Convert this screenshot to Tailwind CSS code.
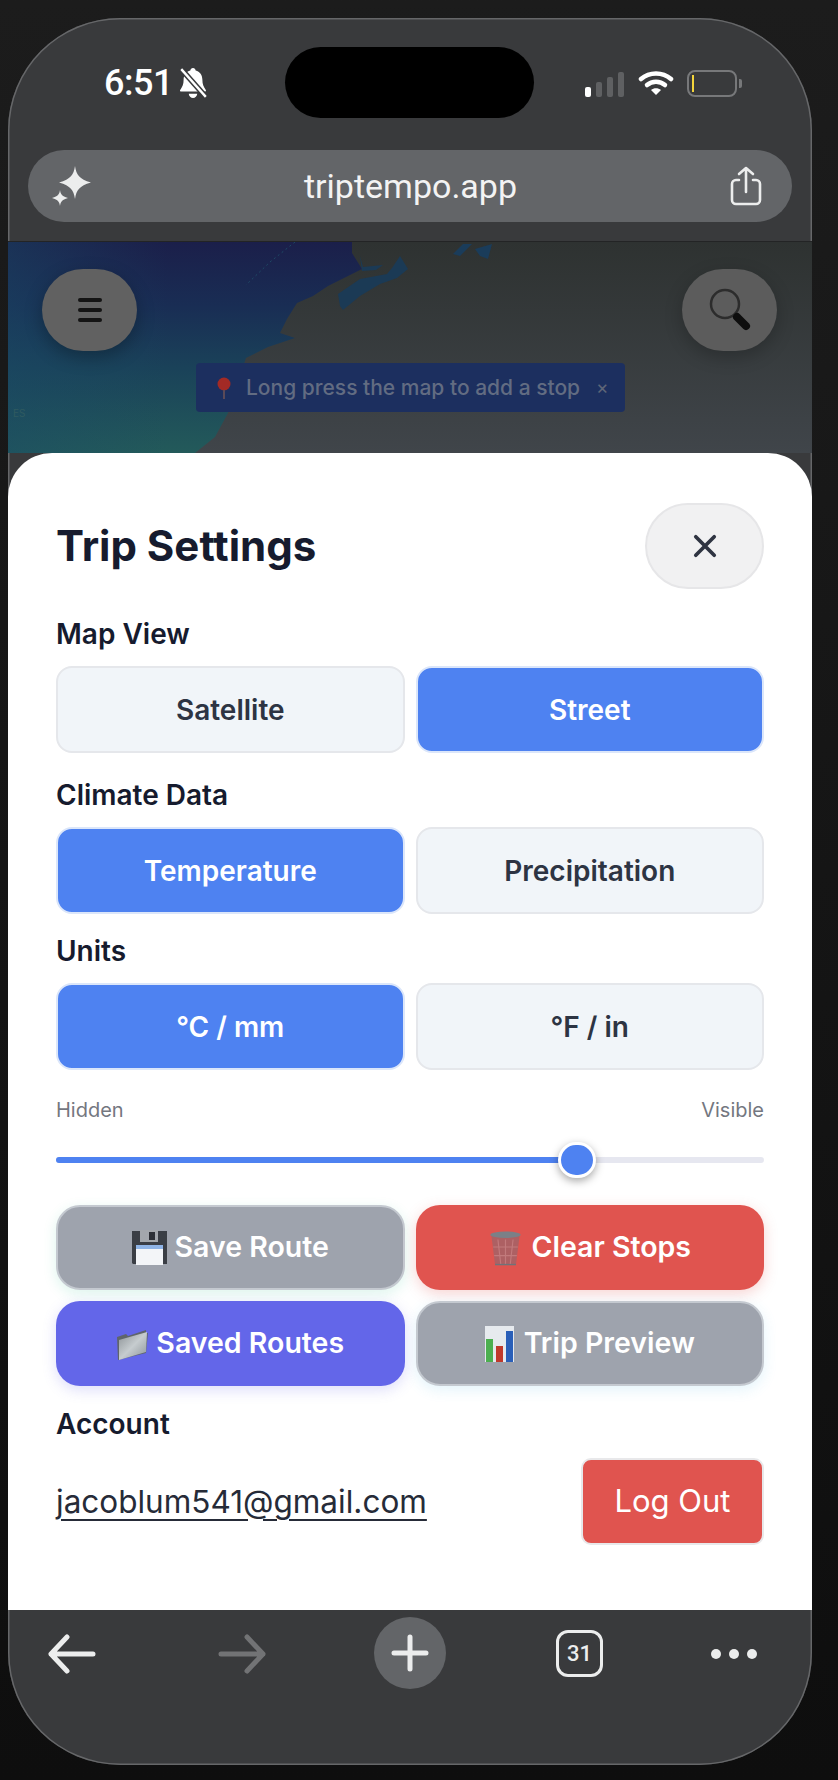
<!DOCTYPE html>
<html>
<head>
<meta charset="utf-8">
<script src="https://cdn.jsdelivr.net/npm/@tailwindcss/browser@4"></script>
</head>
<body class="m-0 bg-[#121212]">
<div class="w-[838px] h-[1780px] pt-[18px] pl-[8px] bg-gradient-to-b from-[#1c1c1c] to-[#0e0e0e] font-['Inter',sans-serif] overflow-hidden">
  <div class="w-[804px] h-[1747px] rounded-[112px] overflow-hidden bg-[#393a3c] shadow-[inset_0_0_0_1.5px_#666769] flex flex-col">
    <!-- status + url -->
    <div class="h-[224px] shrink-0 flex flex-col border-b border-[#232425]">
      <div class="h-[132px] shrink-0 flex items-start relative">
        <div class="absolute left-[277px] top-[29px] w-[249px] h-[71px] rounded-[36px] bg-black"></div>
        <div class="absolute left-[96px] top-[44px] flex items-center gap-[5px] text-white">
          <span class="text-[36px] leading-[42px] font-medium tracking-[-0.5px] font-['Roboto',sans-serif]">6:51</span>
          <svg width="30" height="32" viewBox="0 0 28 30" fill="#fff"><path d="M14 1c1.400 0 2.300 1 2.500 2.200 4 1 6.300 4.300 6.300 8.800 0 4 1 6.500 3.200 9.500.5.800 0 1.500-.8 1.500H2.800c-.8 0-1.300-.7-.8-1.500 2.200-3 3.200-5.500 3.200-9.500 0-4.500 2.300-7.800 6.300-8.800C11.700 2 12.600 1 14 1z"/><path d="M10 25h8c-.3 2.200-1.900 4-4 4s-3.700-1.800-4-4z"/><path d="M3 2l23 26" stroke="#393a3c" stroke-width="5"/><path d="M3 2l23 26" stroke="#fff" stroke-width="2.200"/></svg>
        </div>
        <!-- signal -->
        <div class="absolute left-[577px] top-[53px] flex items-end gap-[5px] h-[26px]">
          <div class="w-[6px] h-[10px] rounded-[2px] bg-white"></div>
          <div class="w-[6px] h-[15px] rounded-[2px] bg-[#5f6062]"></div>
          <div class="w-[6px] h-[20px] rounded-[2px] bg-[#5f6062]"></div>
          <div class="w-[6px] h-[25px] rounded-[2px] bg-[#5f6062]"></div>
        </div>
        <svg class="absolute left-[630px] top-[52px]" width="36" height="26" viewBox="0 0 36 26" fill="none" stroke="#fff" stroke-linecap="round"><path d="M3 9c8.500-7.500 21.500-7.500 30 0" stroke-width="4.500"/><path d="M9 15c5-4.500 13-4.500 18 0" stroke-width="4.500"/><path d="M18 25l-5-5c2.800-2.500 7.200-2.500 10 0z" fill="#fff" stroke="none"/></svg>
        <div class="absolute left-[679px] top-[52px] w-[50px] h-[27px] rounded-[8px] border-2 border-[#77787a] flex items-center pl-[3px]">
          <div class="w-[2px] h-[17px] bg-[#f4d53c]"></div>
        </div>
        <div class="absolute left-[731px] top-[61px] w-[3px] h-[9px] rounded-r-[2px] bg-[#77787a]"></div>
      </div>
      <div class="mx-[20px] h-[72px] rounded-[36px] bg-[#636568] flex items-center justify-between pl-[24px] pr-[29px]">
        <svg width="40" height="40" viewBox="0 0 40 40" fill="#eceded"><path d="M23 0C24.500 9 27 13 39 16.500 27 20 24.500 24 23 33 21.500 24 19 20 7 16.500 19 13 21.500 9 23 0z"/><path d="M8 24c.7 4 1.500 6 8 8-6.500 2-7.300 4-8 8-.7-4-1.500-6-8-8 6.500-2 7.300-4 8-8z"/></svg>
        <span class="text-[34px] leading-[40px] text-[#f3f3f3] font-['Roboto',sans-serif]">triptempo.app</span>
        <svg width="34" height="40" viewBox="0 0 34 40" fill="none" stroke="#eceded" stroke-width="2.600" stroke-linecap="round" stroke-linejoin="round"><path d="M10 14H7a4 4 0 0 0-4 4v16a4 4 0 0 0 4 4h20a4 4 0 0 0 4-4V18a4 4 0 0 0-4-4h-3"/><path d="M17 26V2M10 8l7-6 7 6"/></svg>
      </div>
    </div>
    <!-- map -->
    <div class="relative h-[211px] shrink-0 bg-gradient-to-b from-[#2e3231] to-[#40454a]">
      <svg class="absolute inset-0 w-full h-full" viewBox="0 0 804 211" preserveAspectRatio="none">
        <defs>
          <linearGradient id="oc" x1="0" y1="0" x2="0" y2="1">
            <stop offset="0" stop-color="#1b1f4a"/><stop offset="0.3" stop-color="#192d54"/><stop offset="0.6" stop-color="#1a4259"/><stop offset="1" stop-color="#235a5a"/>
          </linearGradient>
          <linearGradient id="ed" x1="0" y1="0" x2="1" y2="0">
            <stop offset="0" stop-color="#1a4a66" stop-opacity="0.45"/><stop offset="0.45" stop-color="#1a4a66" stop-opacity="0"/>
          </linearGradient>
        </defs>
        <path fill="url(#oc)" d="M0 0H344L344 11 354 27 320 44 305 54 289 61 279 77 272 91 287 96 260 105 238 116 230 140 220 171 207 195 187 211H0z"/>
        <path fill="url(#ed)" d="M0 0H344L344 11 354 27 320 44 305 54 289 61 279 77 272 91 287 96 260 105 238 116 230 140 220 171 207 195 187 211H0z"/>
        <path fill="#1b3a55" d="M330 52 332 64 335 68 352 54 372 42 389 36 400 27 392 14 384 26 379 32 352 37z"/>
        <path fill="#1b3a55" d="M352 14 355 25 375 23 368 28 354 29z"/>
        <path fill="#1a3c5a" d="M445 12 455 2 464 2 452 14z"/>
        <path fill="#1a3c5a" d="M467 7 484 2 480 17 472 14z"/>
        <path fill="none" stroke="#1f4a66" stroke-width="1" stroke-dasharray="2 3" d="M287 0 262 20 238 43"/>
      </svg>
      <div class="absolute left-[34px] top-[27px] w-[95px] h-[82px] rounded-full bg-[#616161] shadow-[0_6px_18px_rgba(0,0,0,0.28)] flex flex-col items-center justify-center gap-[6px]">
        <div class="w-[24px] h-[4px] bg-[#141414] rounded-sm"></div>
        <div class="w-[24px] h-[4px] bg-[#141414] rounded-sm"></div>
        <div class="w-[24px] h-[4px] bg-[#141414] rounded-sm"></div>
      </div>
      <div class="absolute left-[674px] top-[27px] w-[95px] h-[82px] rounded-full bg-[#5c5c5c] shadow-[0_6px_18px_rgba(0,0,0,0.22)] flex items-center justify-center">
        <svg width="46" height="46" viewBox="0 0 46 46" fill="none"><circle cx="18" cy="17" r="14" stroke="#2c2c2c" stroke-width="2.500"/><path d="M30 30l9 9" stroke="#0e0e0e" stroke-width="8" stroke-linecap="round"/></svg>
      </div>
      <div class="absolute left-[188px] top-[121px] w-[429px] h-[49px] rounded-[4px] bg-[#1c2f5f] flex items-center pl-[20px] gap-[14px]">
        <svg width="16" height="22" viewBox="0 0 16 22" class="shrink-0"><circle cx="8" cy="7" r="6.500" fill="#a32a25"/><path d="M8 13v9" stroke="#5a4a58" stroke-width="2"/></svg>
        <span class="text-[21px] leading-[24px] font-medium text-[#626c82] whitespace-nowrap">Long press the map to add a stop</span>
        <span class="ml-[2px] text-[19px] leading-[24px] text-[#5f6678]">×</span>
      </div>
      <span class="absolute left-[5px] top-[165px] text-[10px] leading-[12px] text-[#2f5a60]">ES</span>
    </div>
    <!-- sheet -->
    <div class="relative z-10 h-[1157px] shrink-0 bg-white rounded-t-[44px] pl-[48px] pr-[48px] pt-[50px] flex flex-col">
      <div class="flex items-center justify-between h-[86px]">
        <h1 class="text-[42px] leading-[48px] font-bold text-[#161b2e]">Trip Settings</h1>
        <div class="w-[119px] h-[86px] rounded-full bg-[#f1f1f2] border-2 border-[#e6e6e8] flex items-center justify-center">
          <svg width="24" height="24" viewBox="0 0 26 26" stroke="#2f3442" stroke-width="4" stroke-linecap="round"><path d="M3 3l20 20M23 3L3 23"/></svg>
        </div>
      </div>
      <div class="mt-[29px] text-[28px] leading-[32px] font-semibold text-[#161b2e]">Map View</div>
      <div class="mt-[16px] grid grid-cols-2 gap-[11px]">
        <div class="h-[87px] rounded-[16px] bg-[#f1f5f9] border-2 border-[#e5e7eb] flex items-center justify-center text-[28px] font-semibold text-[#2d3443]">Satellite</div>
        <div class="h-[87px] rounded-[16px] bg-[#4e82f1] border-2 border-[#dbe6fa] flex items-center justify-center text-[28px] font-semibold text-white">Street</div>
      </div>
      <div class="mt-[26px] text-[28px] leading-[32px] font-semibold text-[#161b2e]">Climate Data</div>
      <div class="mt-[16px] grid grid-cols-2 gap-[11px]">
        <div class="h-[87px] rounded-[16px] bg-[#4e82f1] border-2 border-[#dbe6fa] flex items-center justify-center text-[28px] font-semibold text-white">Temperature</div>
        <div class="h-[87px] rounded-[16px] bg-[#f1f5f9] border-2 border-[#e5e7eb] flex items-center justify-center text-[28px] font-semibold text-[#2d3443]">Precipitation</div>
      </div>
      <div class="mt-[21px] text-[28px] leading-[32px] font-semibold text-[#161b2e]">Units</div>
      <div class="mt-[16px] grid grid-cols-2 gap-[11px]">
        <div class="h-[87px] rounded-[16px] bg-[#4e82f1] border-2 border-[#dbe6fa] flex items-center justify-center text-[28px] font-semibold text-white">°C / mm</div>
        <div class="h-[87px] rounded-[16px] bg-[#f1f5f9] border-2 border-[#e5e7eb] flex items-center justify-center text-[28px] font-semibold text-[#2d3443]">°F / in</div>
      </div>
      <div class="mt-[28px] flex justify-between text-[20px] leading-[24px] text-[#74777f]"><span>Hidden</span><span>Visible</span></div>
      <div class="relative mt-[35px] h-[6px] rounded-full bg-[#e6e7f0]">
        <div class="h-full w-[522px] rounded-full bg-[#4e82f1]"></div>
        <div class="absolute left-[502px] -top-[15px] w-[38px] h-[36px] rounded-full bg-[#4e82f1] border-[3px] border-white shadow-[0_3px_8px_rgba(0,0,0,0.35)]"></div>
      </div>
      <div class="mt-[42px] grid grid-cols-2 gap-x-[11px] gap-y-[11px]">
        <div class="h-[85px] rounded-[24px] bg-[#9ea3ad] border-2 border-[#c4c9d0] shadow-[0_4px_14px_rgba(16,185,129,0.14)] flex items-center justify-center gap-[8px] text-[28.5px] font-semibold text-white">
          <svg width="35" height="35" viewBox="0 0 35 35" class="shrink-0"><path d="M0 1h35v33H1l-1-1z" fill="#3a3e45"/><rect x="8" y="0" width="18" height="12" fill="#a3a7ac"/><rect x="17" y="2" width="6" height="8" fill="#2d3036"/><rect x="4" y="15" width="27" height="20" fill="#f3f5f8"/><rect x="4" y="15" width="27" height="4" fill="#8fb4e6"/></svg>
          <span>Save Route</span>
        </div>
        <div class="h-[85px] rounded-[24px] bg-[#e0544f] shadow-[0_4px_14px_rgba(224,84,79,0.25)] flex items-center justify-center gap-[8px] text-[28.5px] font-semibold text-white">
          <svg width="35" height="36" viewBox="0 0 36 38" class="shrink-0"><path d="M3 5h30l-4 32H7z" fill="#ad6063"/><ellipse cx="18" cy="5" rx="16" ry="3.500" fill="#7b8087"/><path d="M10 10l3 26M18 10v26M26 10l-3 26M5 18h26M6 27h24" stroke="#c27a7c" stroke-width="1.200"/><path d="M7 36.500h22" stroke="#6f7379" stroke-width="1.500"/></svg>
          <span>Clear Stops</span>
        </div>
        <div class="h-[85px] rounded-[24px] bg-[#6366e9] shadow-[0_4px_14px_rgba(99,102,233,0.22)] flex items-center justify-center gap-[8px] text-[28.5px] font-semibold text-white">
          <svg width="32" height="32" viewBox="0 0 32 32" class="shrink-0"><defs><linearGradient id="fo" x1="0" y1="0" x2="1" y2="1"><stop offset="0" stop-color="#8c9296"/><stop offset="0.5" stop-color="#c6cccf"/><stop offset="1" stop-color="#8b9398"/></linearGradient></defs><path d="M1 9l9-3 2 2 18-6v3l2 0-2 20L2 32z" fill="#5f656b"/><path d="M3 12L31 4 30 24 3 32z" fill="url(#fo)"/></svg>
          <span>Saved Routes</span>
        </div>
        <div class="h-[85px] rounded-[24px] bg-[#9ea3ad] border-2 border-[#c4c9d0] shadow-[0_4px_14px_rgba(59,180,230,0.14)] flex items-center justify-center gap-[10px] text-[28.5px] font-semibold text-white">
          <svg width="29" height="36" viewBox="0 0 29 36" class="shrink-0"><rect width="29" height="36" fill="#e6eaee"/><rect x="1" y="13" width="7" height="23" fill="#4caf50"/><rect x="11" y="20" width="7" height="16" fill="#c0392b"/><rect x="21" y="5" width="7" height="31" fill="#2a5fb8"/></svg>
          <span>Trip Preview</span>
        </div>
      </div>
      <div class="mt-[22px] text-[28px] leading-[32px] font-semibold text-[#161b2e]">Account</div>
      <div class="mt-[18px] flex items-center justify-between">
        <span class="text-[31.5px] leading-[38px] text-[#262b38] underline underline-offset-[6px] decoration-[1.5px]">jacoblum541@gmail.com</span>
        <div class="w-[183px] h-[87px] rounded-[10px] bg-[#e0544f] border-2 border-[#e8e8ea] flex items-center justify-center text-[31px] text-white">Log Out</div>
      </div>
    </div>
    <!-- toolbar -->
    <div class="relative flex-1">
      <svg class="absolute left-[40px] top-[24px]" width="48" height="40" viewBox="0 0 48 40" fill="none" stroke="#eceded" stroke-width="5" stroke-linecap="round" stroke-linejoin="round"><path d="M3 20h42M19 3L3 20l16 17"/></svg>
      <svg class="absolute left-[210px] top-[24px]" width="48" height="40" viewBox="0 0 48 40" fill="none" stroke="#727375" stroke-width="5" stroke-linecap="round" stroke-linejoin="round"><path d="M3 20h42M29 3l16 17-16 17"/></svg>
      <div class="absolute left-[366px] top-[7px] w-[72px] h-[72px] rounded-full bg-[#636568] flex items-center justify-center">
        <svg width="38" height="38" viewBox="0 0 38 38" stroke="#eceded" stroke-width="5" stroke-linecap="round"><path d="M19 3v32M3 19h32"/></svg>
      </div>
      <div class="absolute left-[548px] top-[20px] w-[47px] h-[47px] rounded-[12px] border-[3.500px] border-[#eceded] flex items-center justify-center text-[22px] font-medium text-[#eceded] font-['Roboto',sans-serif]">31</div>
      <div class="absolute left-[703px] top-[39px] flex gap-[8px]">
        <div class="w-[10px] h-[10px] rounded-full bg-[#eceded]"></div>
        <div class="w-[10px] h-[10px] rounded-full bg-[#eceded]"></div>
        <div class="w-[10px] h-[10px] rounded-full bg-[#eceded]"></div>
      </div>
    </div>
  </div>
</div>
</body>
</html>
